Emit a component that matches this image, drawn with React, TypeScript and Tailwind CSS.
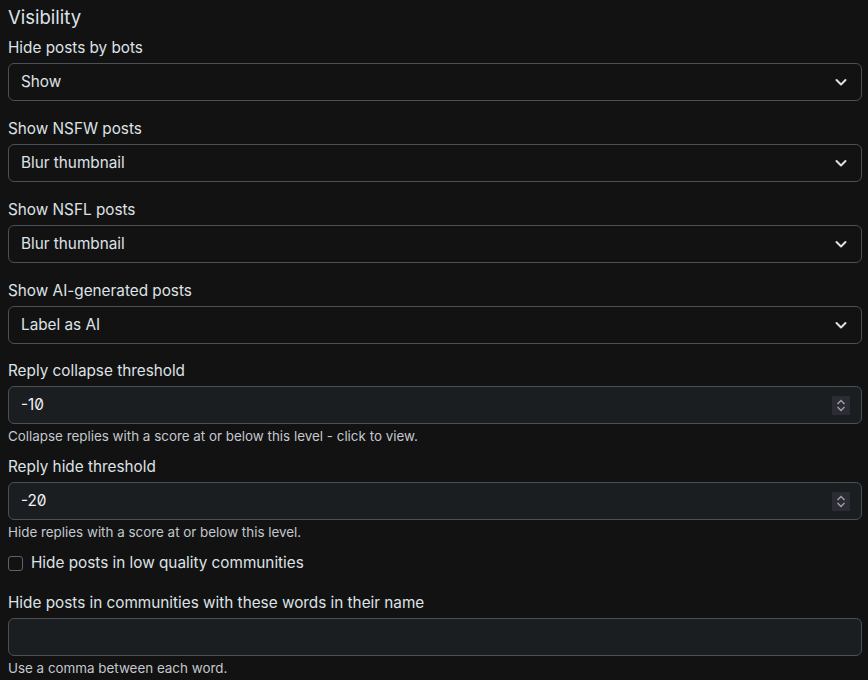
import React from "react";

const Chevron = () => (
  <svg width="16" height="16" viewBox="0 0 16 16" className="shrink-0">
    <path d="M3.5 6l4.5 4.5L12.5 6" fill="none" stroke="#dee2e6" strokeWidth="2" strokeLinecap="round" strokeLinejoin="round" />
  </svg>
);

const Label = ({ children }: { children: React.ReactNode }) => (
  <div className="text-[15.3px] leading-[23px] mb-1 text-[#dee2e6]">{children}</div>
);

const Select = ({ label, value, last }: { label: string; value: string; last?: boolean }) => (
  <div className={last ? "mb-[15px]" : "mb-4"}>
    <Label>{label}</Label>
    <div className="h-[38px] rounded-[6px] border border-[#495057] bg-[#121212] flex items-center pl-3 pr-[12px] text-[15.3px] text-[#dee2e6]">
      <span className="flex-1">{value}</span>
      <Chevron />
    </div>
  </div>
);

const Spinner = () => (
  <div className="w-[18px] h-[19px] bg-[#2c2c34] flex flex-col items-center justify-center gap-[1px]">
    <svg width="10" height="6" viewBox="0 0 10 6"><path d="M1.5 5L5 1.5 8.5 5" fill="none" stroke="#a0a0a8" strokeWidth="1.4" /></svg>
    <svg width="10" height="6" viewBox="0 0 10 6"><path d="M1.5 1L5 4.5 8.5 1" fill="none" stroke="#a0a0a8" strokeWidth="1.4" /></svg>
  </div>
);

const Help = ({ children }: { children: React.ReactNode }) => (
  <div className="text-[13.4px] leading-[18px] mt-[3px] text-[#c3c8ce]">{children}</div>
);

const NumberInput = ({ label, value, help }: { label: string; value: string; help: string }) => (
  <div className="mb-[10px]">
    <Label>{label}</Label>
    <div className="h-[38px] rounded-[6px] border border-[#495057] bg-[#1b1e21] flex items-center pl-3 pr-[11px] text-[15.3px] text-[#f1f3f5]">
      <span className="flex-1 [font-feature-settings:'zero']">{value}</span>
      <Spinner />
    </div>
    <Help>{help}</Help>
  </div>
);

export default function App() {
  return (
    <div
      className="w-[868px] h-[680px] bg-[#121212] pl-2 pr-[6px] pt-[5px] overflow-hidden"
      style={{ fontFamily: "Inter, 'Noto Sans', sans-serif" }}
    >
      <div className="text-[18.5px] leading-[24px] mb-[7px] text-[#dee2e6]">Visibility</div>
      <Select label="Hide posts by bots" value="Show" />
      <Select label="Show NSFW posts" value="Blur thumbnail" />
      <Select label="Show NSFL posts" value="Blur thumbnail" />
      <Select label="Show AI-generated posts" value="Label as AI" last />
      <NumberInput label="Reply collapse threshold" value="-10" help="Collapse replies with a score at or below this level - click to view." />
      <NumberInput label="Reply hide threshold" value="-20" help="Hide replies with a score at or below this level." />
      <div className="flex items-center gap-2 h-[24px] mb-[16px] mt-[3px]">
        <div className="w-[15px] h-[15px] rounded-[3px] border border-[#5c636a] bg-[#121212]" />
        <span className="text-[15.3px] text-[#dee2e6]">Hide posts in low quality communities</span>
      </div>
      <Label>Hide posts in communities with these words in their name</Label>
      <div className="h-[38px] rounded-[6px] border border-[#495057] bg-[#1b1e21]" />
      <Help>Use a comma between each word.</Help>
    </div>
  );
}
